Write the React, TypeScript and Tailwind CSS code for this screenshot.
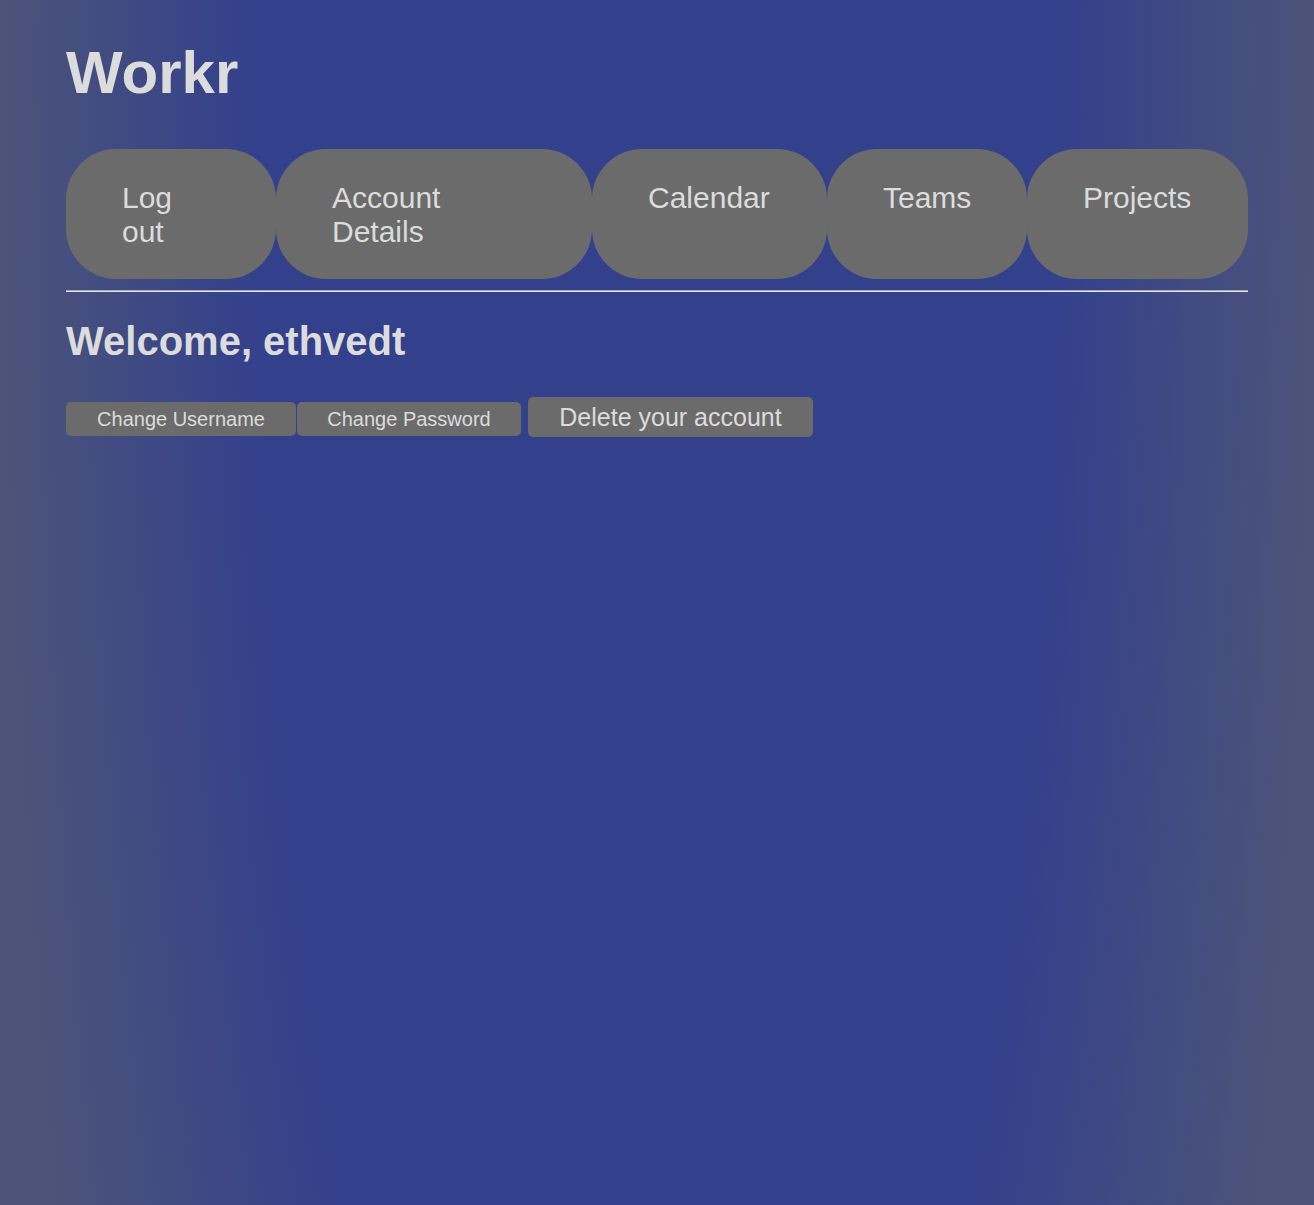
const navItems = [
  { label: "Log out", width: "w-[210px]" },
  { label: "Account Details", width: "w-[316px]" },
  { label: "Calendar", width: "w-[235px]" },
  { label: "Teams", width: "w-[200px]" },
  { label: "Projects", width: "w-[221px]" },
];

export default function App() {
  return (
    <div className="min-h-screen px-[66px] pt-[43px] text-[#dcdcdc] font-['Liberation_Sans',Arial,sans-serif] bg-[radial-gradient(ellipse_657px_2870px_at_50%_5%,#33408c_61%,#4c5479_100%)]">
      <div className="w-[1182px]">
        <h1 className="text-[60px] font-bold leading-none">Workr</h1>

        <nav className="mt-[46px] flex">
          {navItems.map((item) => (
            <a
              key={item.label}
              href="#"
              className={`${item.width} shrink-0 h-[130px] rounded-[50px] bg-[#6b6b6b] px-[56px] pt-[32px] text-[30px] leading-[34px]`}
            >
              {item.label}
            </a>
          ))}
        </nav>

        <div className="mt-[11px] border-t border-b border-t-[#a8a8b0] border-b-[#e4e4e4]" />

        <h2 className="mt-[29px] text-[40px] font-bold leading-none">Welcome, ethvedt</h2>

        <div className="mt-[36px] flex items-baseline">
          <button className="w-[230px] rounded-[5px] bg-[#6b6b6b] py-[5px] text-[20px] leading-[24px]">
            Change Username
          </button>
          <button className="ml-px w-[224px] rounded-[5px] bg-[#6b6b6b] py-[5px] text-[20px] leading-[24px]">
            Change Password
          </button>
          <button className="ml-[7px] w-[285px] rounded-[5px] bg-[#6b6b6b] py-[6px] text-[25px] leading-[28px]">
            Delete your account
          </button>
        </div>
      </div>
    </div>
  );
}
